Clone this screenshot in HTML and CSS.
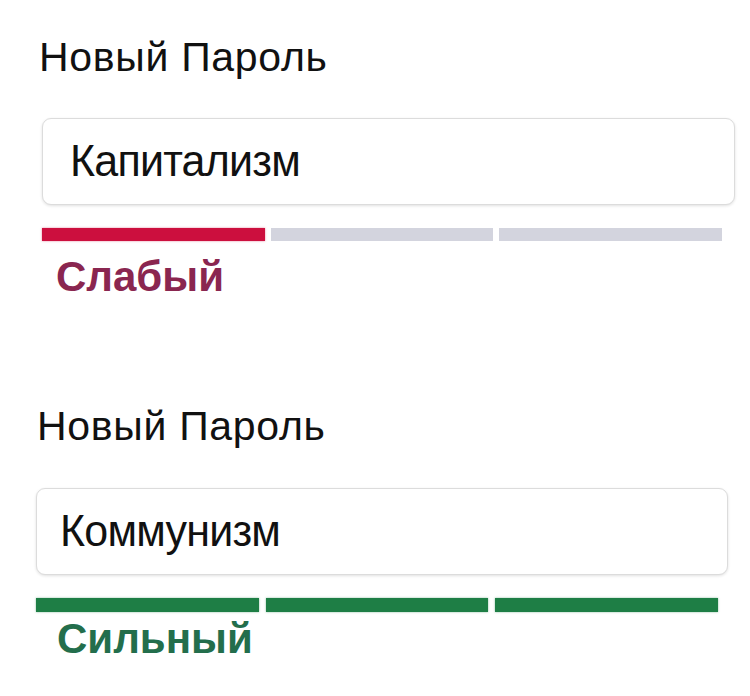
FILE: index.html
```html
<!DOCTYPE html>
<html lang="ru">
<head>
<meta charset="utf-8">
<link rel="stylesheet" href="styles.css">
</head>
<body>
<main class="page">
  <section class="field field-weak">
    <div class="label">Новый Пароль</div>
    <div class="input"><span class="value">Капитализм</span></div>
    <div class="meter">
      <span class="seg seg-red"></span>
      <span class="seg seg-empty"></span>
      <span class="seg seg-empty"></span>
    </div>
    <div class="strength strength-weak">Слабый</div>
  </section>
  <section class="field field-strong">
    <div class="label">Новый Пароль</div>
    <div class="input"><span class="value">Коммунизм</span></div>
    <div class="meter">
      <span class="seg seg-green"></span>
      <span class="seg seg-green"></span>
      <span class="seg seg-green"></span>
    </div>
    <div class="strength strength-strong">Сильный</div>
  </section>
</main>
</body>
</html>
```
FILE: styles.css
```css
html, body {
  margin: 0;
  padding: 0;
  background: #ffffff;
}
body {
  font-family: "Liberation Sans", Arial, sans-serif;
  color: #111111;
  width: 750px;
  height: 696px;
  overflow: hidden;
}
.page {
  display: flex;
  flex-direction: column;
}
.field {
  display: flex;
  flex-direction: column;
}
.field-weak {
  padding: 37px 0 0 42px;
  width: 693px;
}
.field-strong {
  padding: 109px 0 0 36px;
  width: 692px;
}
.label {
  font-size: 41px;
  line-height: 40px;
  letter-spacing: 0.7px;
  margin-left: -3px;
}
.field-strong .label {
  margin-left: 1px;
}
.input {
  margin-top: 41px;
  height: 85px;
  border: 1px solid #dcdcdc;
  border-radius: 9px;
  box-shadow: 0 1px 3px rgba(0, 0, 0, 0.12);
  background: #fff;
  display: flex;
  align-items: center;
  padding-left: 27px;
}
.field-strong .input {
  margin-top: 42px;
  padding-left: 23px;
}
.value {
  font-size: 45px;
  line-height: 45px;
  letter-spacing: -0.8px;
  display: inline-block;
  transform: scaleX(0.955);
  transform-origin: left center;
  margin-top: -3px;
}
.meter {
  margin-top: 23px;
  width: 680px;
  display: grid;
  grid-template-columns: 1fr 1fr 1fr;
  gap: 6px;
}
.seg {
  height: 13px;
  display: block;
}
.seg-red {
  background: #cc0f3e;
  box-shadow: 0 0 2px rgba(204, 15, 62, 0.5);
}
.seg-empty {
  background: #d3d4de;
}
.seg-green {
  background: #1e7e45;
  box-shadow: 0 0 2px rgba(30, 126, 69, 0.5);
}
.strength {
  font-weight: bold;
  font-size: 42px;
  line-height: 40px;
  margin-top: 16px;
  padding-left: 14px;
}
.strength-weak {
  color: #8a2650;
}
.strength-strong {
  color: #236e4c;
  margin-top: 7px;
  padding-left: 21px;
}
.field-strong .meter {
  width: 682px;
  margin-top: 23px;
  gap: 7px;
}
.field-strong .seg {
  height: 14px;
}
```
